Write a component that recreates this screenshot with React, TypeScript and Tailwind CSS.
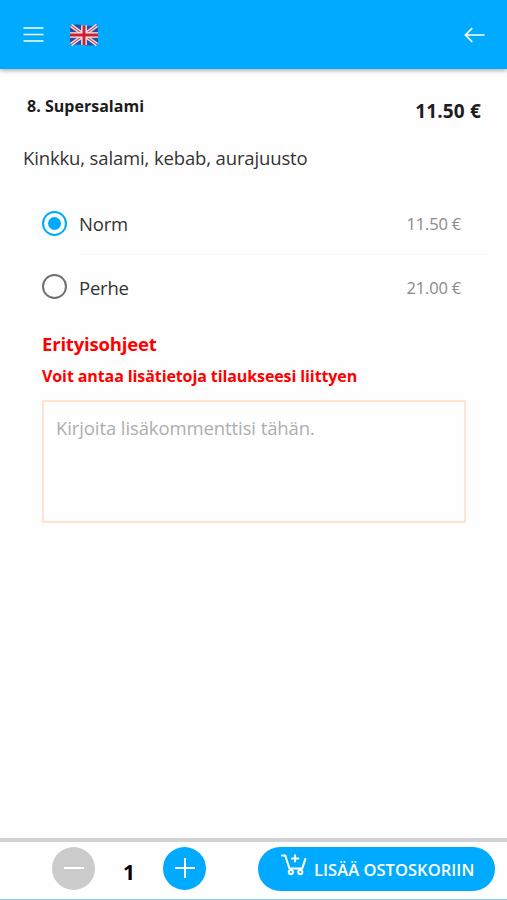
import { useState } from 'react';

interface Size {
  id: string;
  label: string;
  price: string;
}

const sizes: Size[] = [
  { id: 'norm', label: 'Norm', price: '11.50 €' },
  { id: 'perhe', label: 'Perhe', price: '21.00 €' },
];

function FlagIcon() {
  return (
    <svg width="28" height="22" viewBox="0 0 28 22">
      <path d="M0 1.4Q7 -.2 14 1.2T28 1V20.6Q21 22.2 14 21T0 21Z" fill="#2b4f9f" />
      <path d="M1 1.5 27 20.5M27 1.5 1 20.5" stroke="#efe6ee" strokeWidth="3.8" />
      <path d="M1 1.5 27 20.5M27 1.5 1 20.5" stroke="#dd5560" strokeWidth="1.3" />
      <path d="M14 1.2V21M0 11H28" stroke="#f6f1f4" strokeWidth="5.6" />
      <path d="M14 1.2V21M0 11H28" stroke="#cf1f2e" strokeWidth="3" />
    </svg>
  );
}

function CartIcon() {
  return (
    <svg width="26" height="22" viewBox="0 0 26 22" fill="none" stroke="#fff" strokeWidth="2" strokeLinecap="round" strokeLinejoin="round">
      <path d="M1 1.4H4.2L8.4 14.4H21.3L24.4 4.9" />
      <path d="M14.1 1.2V7.6M10.9 4.4H17.3" />
      <circle cx="9.9" cy="18.1" r="2.1" />
      <circle cx="19.3" cy="18.1" r="2.1" />
    </svg>
  );
}

export default function App() {
  const [selected, setSelected] = useState('norm');
  const [count, setCount] = useState(1);
  const [comment, setComment] = useState('');

  return (
    <div className="flex h-[900px] w-[507px] flex-col overflow-hidden bg-[#fefefe] font-['Open_Sans','Noto_Sans',sans-serif] text-[#333]">
      <header className="flex h-[69px] shrink-0 items-center bg-[#00aaff] pl-[23px] pr-[22px] shadow-[0_1px_5px_rgba(0,0,0,0.4)]">
        <button aria-label="Menu">
          <svg width="21" height="17" viewBox="0 0 21 17" stroke="#fff" strokeWidth="1.5">
            <path d="M.5 2H20.5M.5 8.5H20.5M.5 15H20.5" />
          </svg>
        </button>
        <button className="ml-[26px]" aria-label="English">
          <FlagIcon />
        </button>
        <button className="ml-auto" aria-label="Back">
          <svg width="21" height="16" viewBox="0 0 21 16" fill="none" stroke="#fff" strokeWidth="1.7">
            <path d="M8.2 1.2 1.5 8 8.2 14.8M1.5 8H20.5" />
          </svg>
        </button>
      </header>

      <main className="flex grow flex-col">
        <div className="flex items-start justify-between pl-[27px] pr-[26px] pt-[25px] text-[#1c1c1c]">
          <h1 className="text-[16px]/6 font-bold whitespace-nowrap tracking-[0.02px]">8. Supersalami</h1>
          <span className="mt-[5px] text-[19px]/6 font-bold whitespace-nowrap tracking-[0.15px]">11.50 €</span>
        </div>
        <p className="mt-[21px] pl-[23px] text-[18.5px]/7 whitespace-nowrap tracking-[-0.14px]">Kinkku, salami, kebab, aurajuusto</p>

        <div className="mt-5 pl-[42px]">
          {sizes.map((size, index) => (
            <label key={size.id} className="flex h-[63px] items-center">
              <input
                type="radio"
                name="size"
                className="peer sr-only"
                checked={selected === size.id}
                onChange={() => setSelected(size.id)}
              />
              <span className="flex size-[25px] items-center justify-center rounded-full border-[2.5px] border-[#707070] peer-checked:border-[#00aaff]">
                {selected === size.id && <span className="size-[13px] rounded-full bg-[#00aaff]" />}
              </span>
              <span
                className={
                  index === 0
                    ? 'ml-3 flex h-full grow items-center justify-between border-b border-[#f9f9f9] pr-[26px] mr-5'
                    : 'ml-3 flex h-full grow items-center justify-between pr-[26px] mr-5'
                }
              >
                <span className="pt-0.5 text-[18.5px]/7 tracking-[-0.2px]">{size.label}</span>
                <span className="pt-0.5 text-[16.5px]/6 tracking-[-0.2px] text-[#8a8a8a]">{size.price}</span>
              </span>
            </label>
          ))}
        </div>

        <div className="pl-[42px] pr-[41px] pt-3">
          <h2 className="text-[18.5px]/7 font-bold whitespace-nowrap tracking-[-0.18px] text-[#ff0000]">Erityisohjeet</h2>
          <h3 className="mt-1 text-[16px]/7 font-bold whitespace-nowrap tracking-[-0.1px] text-[#ff0000]">Voit antaa lisätietoja tilaukseesi liittyen</h3>
          <textarea
            className="mt-[10px] block h-[123px] w-full resize-none border-2 border-[#ffe4d4] px-3 py-3 text-[18.5px]/7 tracking-[-0.1px] outline-none placeholder:text-[#aeaeae]"
            placeholder="Kirjoita lisäkommenttisi tähän."
            value={comment}
            onChange={(e) => setComment(e.target.value)}
          />
        </div>
      </main>

      <footer className="shrink-0">
        <div className="h-1 bg-[#d2d2d2]" />
        <div className="flex h-[57px] items-start pl-[52px] pr-3 pt-[5px]">
          <button
            className="flex size-[43px] items-center justify-center rounded-full bg-[#cbcbcb]"
            aria-label="Decrease"
            onClick={() => setCount(Math.max(1, count - 1))}
          >
            <svg width="20" height="20" viewBox="0 0 20 20" stroke="#fff" strokeWidth="2"><path d="M0 9H20" /></svg>
          </button>
          <span className="w-[68px] pt-[11px] text-center text-[21px]/7 font-bold text-black">{count}</span>
          <button
            className="flex size-[43px] items-center justify-center rounded-full bg-[#00aaff]"
            aria-label="Increase"
            onClick={() => setCount(count + 1)}
          >
            <svg width="20" height="20" viewBox="0 0 20 20" className="overflow-visible" stroke="#fff" strokeWidth="2"><path d="M0 9H20M10 -1V19" /></svg>
          </button>
          <button className="ml-auto flex h-11 w-[237px] items-center rounded-full bg-[#00aaff] pl-[23px] text-[16.5px]/6 font-semibold whitespace-nowrap text-white">
            <span className="mb-[9px]"><CartIcon /></span>
            <span className="ml-[7px] pt-px tracking-[0.04px]">LISÄÄ OSTOSKORIIN</span>
          </button>
        </div>
        <div className="h-px bg-[#7fd0ee]" />
      </footer>
    </div>
  );
}
